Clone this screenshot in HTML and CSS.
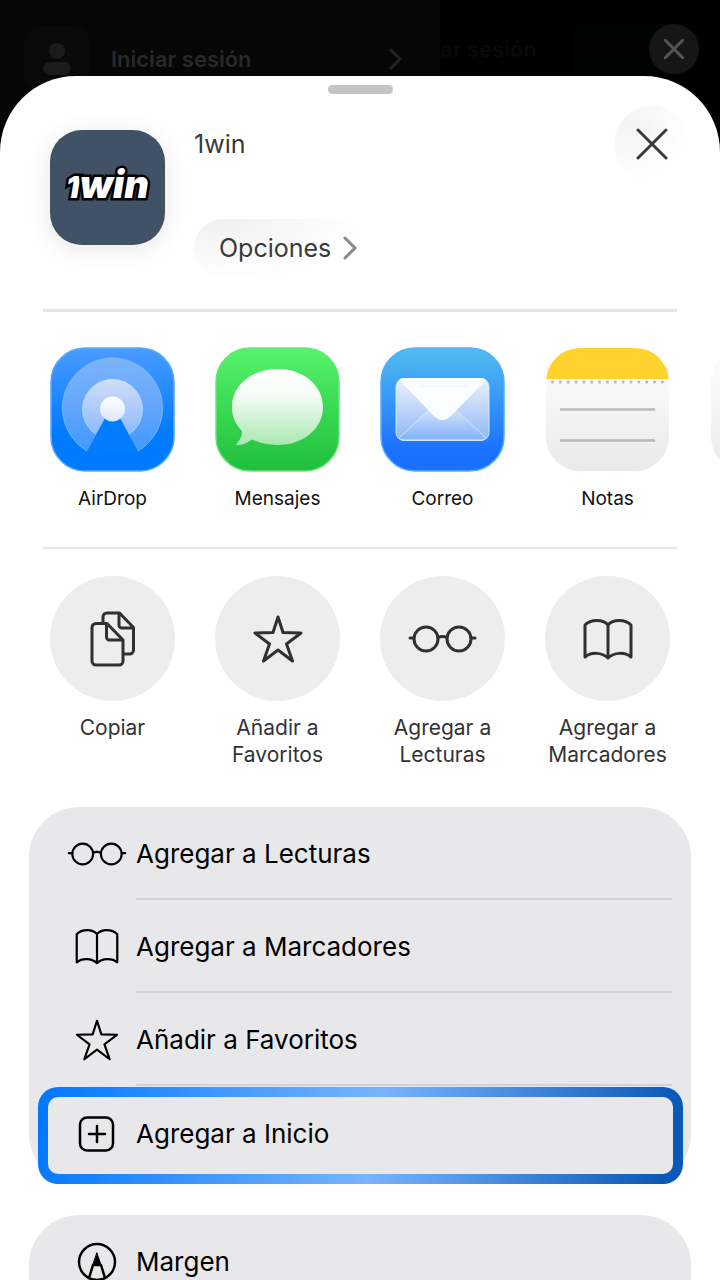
FILE: index.html
```html
<!DOCTYPE html>
<html lang="es">
<head>
<meta charset="utf-8">
<meta name="viewport" content="width=device-width, initial-scale=1">
<title>Compartir 1win</title>
<link rel="stylesheet" href="styles.css">
</head>
<body>

<!-- icons used more than once -->
<svg class="sprite" aria-hidden="true">
	<symbol id="glasses" viewBox="0 0 69 30">
		<circle cx="18" cy="15" r="12"/>
		<circle cx="51" cy="15" r="12"/>
		<path d="M30 13.500q4.500-2 9 0M2 14H6M63 14h4"/>
	</symbol>
	<symbol id="book" viewBox="0 0 50 42">
		<path d="M25 7C20 1 8 1 2 7V39C8 34 19 34 25 40C31 34 42 34 48 39V7C42 1 30 1 25 7V40"/>
	</symbol>
	<symbol id="star" viewBox="0 0 50 48">
		<path d="M25 2L30 17.500L48 18L33.500 29L39.500 46L25 35L10.500 46L16.500 29L2 18L20 17.500Z"/>
	</symbol>
</svg>

<div class="screen">
	<header class="backdrop">
		<div class="menu">
			<span class="avatar">
				<svg width="30" height="34" viewBox="0 0 30 34"><circle cx="15" cy="9" r="8"/><rect x="1" y="20" width="28" height="13" rx="7"/></svg>
			</span>
			<span class="login">Iniciar sesión</span>
			<svg class="menu-arrow" width="14" height="24" viewBox="0 0 14 24"><path d="M2 2l10 10L2 22"/></svg>
		</div>
		<div class="page-bar">
			<span class="page-login">ar sesión</span>
			<span class="page-register"></span>
			<button class="menu-close" aria-label="Cerrar menú">
				<svg width="20" height="20" viewBox="0 0 20 20"><path d="M1 1l18 18M19 1L1 19"/></svg>
			</button>
		</div>
	</header>

	<main class="sheet">
		<div class="grabber"></div>

		<section class="app">
			<div class="app-icon"><span><small>1</small>win</span></div>
			<div class="app-info">
				<h1>1win</h1>
				<button class="options">Opciones
					<svg width="16" height="26" viewBox="0 0 16 26"><path d="M3 3l10 10L3 23"/></svg>
				</button>
			</div>
			<button class="close" aria-label="Cerrar">
				<svg width="32" height="32" viewBox="0 0 32 32"><path d="M2 2l28 28M30 2L2 30"/></svg>
			</button>
		</section>

		<nav class="row apps">
			<a href="#" class="item">
				<svg width="125" height="125" viewBox="0 0 125 125">
					<defs>
						<linearGradient id="air" x2="0" y2="1"><stop offset="0" stop-color="#4a9bff"/><stop offset=".7" stop-color="#007aff"/></linearGradient>
						<linearGradient id="airOuter" x2="0" y2="1"><stop offset="0" stop-color="#7db4fa"/><stop offset=".5" stop-color="#65a6fb"/><stop offset="1" stop-color="#3f99ff"/></linearGradient>
						<linearGradient id="airInner" x2="0" y2="1"><stop offset="0" stop-color="#d0def8"/><stop offset="1" stop-color="#8fb9fc"/></linearGradient>
						<linearGradient id="pearl" x2="0" y2="1"><stop offset="0" stop-color="#fff"/><stop offset="1" stop-color="#dce7fa"/></linearGradient>
					</defs>
					<rect x="1" y="1" width="123" height="123" rx="34" fill="url(#air)" stroke="#58aaff" stroke-width="1.500"/>
					<path d="M37 104A50 50 0 1 1 88 104L62.500 58Z" fill="url(#airOuter)" stroke="#7fbcff" stroke-width=".8"/>
					<path d="M47 88A30 30 0 1 1 78 88L62.500 60Z" fill="url(#airInner)" stroke="#bdddff" stroke-width=".8"/>
					<path d="M36.500 105L55 71H70L88.500 105Z" fill="#047cff"/>
					<circle cx="62.500" cy="62" r="12.500" fill="url(#pearl)"/>
				</svg>
				<span>AirDrop</span>
			</a>
			<a href="#" class="item">
				<svg width="125" height="125" viewBox="0 0 125 125">
					<defs>
						<linearGradient id="sms" x2="0" y2="1"><stop offset="0" stop-color="#56f36c"/><stop offset="1" stop-color="#1fbf3b"/></linearGradient>
						<linearGradient id="bubble" x2="0" y2="1"><stop offset="0" stop-color="#fff"/><stop offset=".35" stop-color="#f4fcf5"/><stop offset="1" stop-color="#a9e8b1"/></linearGradient>
					</defs>
					<rect x="1" y="1" width="123" height="123" rx="34" fill="url(#sms)" stroke="#66e67a" stroke-width="1.500"/>
					<path d="M62.500 22C88 22 108 38 108 60S88 98 62.500 98C53 98 45 96 37 92.500C32 96 28 98 22 98C21 98 21 97 22 96C26 92 27 88 27 84C20 77 17 69 17 60C17 38 37 22 62.500 22Z" fill="url(#bubble)"/>
				</svg>
				<span>Mensajes</span>
			</a>
			<a href="#" class="item">
				<svg width="125" height="125" viewBox="0 0 125 125">
					<defs>
						<linearGradient id="mail" x2="0" y2="1"><stop offset="0" stop-color="#52bdef"/><stop offset=".85" stop-color="#1a70ff"/></linearGradient>
						<linearGradient id="paper" x2="0" y2="1"><stop offset="0" stop-color="#ecf2fd"/><stop offset="1" stop-color="#8db7f4"/></linearGradient>
						<linearGradient id="fold" x2="0" y2="1"><stop offset="0" stop-color="#e2eafa"/><stop offset="1" stop-color="#7fb2fb"/></linearGradient>
					</defs>
					<rect x="1" y="1" width="123" height="123" rx="34" fill="url(#mail)" stroke="#5aaef8" stroke-width="1.500"/>
					<rect x="16" y="31.500" width="93" height="62" rx="8" fill="url(#paper)" stroke="#d0e8ff"/>
					<path d="M19 91L54 58H71L106 91Q104 93 101 93H24Q21 93 19 91Z" fill="url(#fold)" stroke="#cdeaff"/>
					<path d="M19 33Q21 31 24 31H101Q104 31 106 33L72 68Q62.500 78 53 68Z" fill="#fcfdff"/>
					<path d="M40 39h48" stroke="#ecf1fa" fill="none"/>
				</svg>
				<span>Correo</span>
			</a>
			<a href="#" class="item">
				<svg width="125" height="125" viewBox="0 0 125 125">
					<defs>
						<linearGradient id="note" x2="0" y2="1"><stop offset=".25" stop-color="#fafafa"/><stop offset="1" stop-color="#e9e9e9"/></linearGradient>
						<clipPath id="noteClip"><rect x="1" y="1" width="123" height="123" rx="34"/></clipPath>
					</defs>
					<g clip-path="url(#noteClip)">
						<path d="M0 0h125v125H0z" fill="url(#note)"/>
						<path d="M0 0h125v32H0z" fill="#ffd22e"/>
					</g>
					<path d="M7.500 35H118" fill="none" stroke="#b8b5ad" stroke-width="3" stroke-linecap="round" stroke-dasharray="0 7.850"/>
					<path d="M16 62.500h93M16 93.500h93" stroke="#b9b9b9" stroke-width="2.500" stroke-linecap="round"/>
				</svg>
				<span>Notas</span>
			</a>
			<a href="#" class="item" aria-label="Más">
				<svg width="125" height="125" viewBox="0 0 125 125"><rect x="1" y="1" width="123" height="123" rx="34" fill="url(#note)"/></svg>
			</a>
		</nav>

		<div class="row actions">
			<button class="item">
				<span class="circle"><svg width="46" height="56" viewBox="0 0 46 56">
					<path d="M6 12.500H17L33 29V50a4 4 0 0 1-4 4H6a4 4 0 0 1-4-4V16.500a4 4 0 0 1 4-4zM16.500 13V26a3 3 0 0 0 3 3H33"/>
					<path d="M13 12V6a4 4 0 0 1 4-4H29.500L43.500 16.500V39a4 4 0 0 1-4 4H33.500M29 2.500V14a3 3 0 0 0 3 3H43"/>
				</svg></span>
				<span>Copiar</span>
			</button>
			<button class="item">
				<span class="circle"><svg width="50" height="48"><use href="#star"/></svg></span>
				<span>Añadir a<br>Favoritos</span>
			</button>
			<button class="item">
				<span class="circle"><svg width="69" height="30"><use href="#glasses"/></svg></span>
				<span>Agregar a<br>Lecturas</span>
			</button>
			<button class="item">
				<span class="circle"><svg width="50" height="42"><use href="#book"/></svg></span>
				<span>Agregar a<br>Marcadores</span>
			</button>
		</div>

		<div class="card">
			<button class="line">
				<svg width="60" height="26"><use href="#glasses"/></svg>
				<span>Agregar a Lecturas</span>
			</button>
			<button class="line">
				<svg width="60" height="37"><use href="#book"/></svg>
				<span>Agregar a Marcadores</span>
			</button>
			<button class="line">
				<svg width="60" height="42"><use href="#star"/></svg>
				<span>Añadir a Favoritos</span>
			</button>
			<button class="line highlight">
				<svg width="60" height="36" viewBox="0 0 60 36"><rect x="13" y="1.500" width="33" height="33" rx="7"/><path d="M30 10v16M22 18h16"/></svg>
				<span>Agregar a Inicio</span>
			</button>
		</div>

		<div class="card">
			<button class="line">
				<svg width="60" height="40" viewBox="0 0 60 40"><circle cx="30" cy="20" r="18"/><path d="M22 36l4-13h8l4 13"/><path class="solid" d="M30 11l4 12h-8z"/></svg>
				<span>Margen</span>
			</button>
		</div>
	</main>
</div>

</body>
</html>
```
FILE: styles.css
```css
* {
	box-sizing: border-box;
}

body {
	margin: 0;
	background: #000;
	font-family: Inter, "Liberation Sans", sans-serif;
}

button {
	padding: 0;
	border: 0;
	background: none;
	font: inherit;
	color: inherit;
}

svg {
	display: block;
	flex: none;
}

.sprite {
	position: absolute;
	width: 0;
	height: 0;
}

.screen {
	display: flex;
	flex-direction: column;
	height: 100vh;
	overflow: hidden;
}

/* dimmed page behind the sheet */
.backdrop {
	display: flex;
	height: 76px;
	flex: none;
}

.menu {
	display: flex;
	align-items: center;
	flex: 0 0 440px;
	height: 118px;
	padding: 0 38px 0 24px;
	background: #060606;
}

.avatar {
	display: flex;
	align-items: center;
	justify-content: center;
	width: 66px;
	height: 66px;
	border-radius: 18px;
	background: #090909;
	fill: #1b1b1b;
}

.login {
	flex: 1;
	margin-left: 21px;
	font-size: 22px;
	font-weight: 600;
	color: #292929;
}

.menu-arrow {
	fill: none;
	stroke: #222;
	stroke-width: 3;
}

.page-bar {
	display: flex;
	align-items: center;
	flex: 1;
	height: 98px;
	padding-right: 21px;
}

.page-login {
	font-size: 22px;
	font-weight: 600;
	color: #090909;
}

.page-register {
	flex: 1;
	height: 50px;
	margin: 0 -50px 0 35px;
	border-radius: 12px;
	background: #000401;
}

.menu-close {
	display: flex;
	align-items: center;
	justify-content: center;
	width: 50px;
	height: 50px;
	border-radius: 50%;
	background: #141715;
	stroke: #555;
	stroke-width: 3;
	stroke-linecap: round;
}

.sheet {
	position: relative;
	flex: 1 0 auto;
	padding-top: 9px;
	border-radius: 76px 76px 0 0;
	background: #fff;
}

.grabber {
	width: 65px;
	height: 9px;
	margin: 0 auto;
	border-radius: 5px;
	background: #c4c4c4;
}

.app {
	display: flex;
	margin: 0 43px;
	padding: 12px 0 32px 7px;
	border-bottom: 3px solid #e6e6e6;
}

.app-icon {
	display: flex;
	align-items: center;
	justify-content: center;
	width: 115px;
	height: 115px;
	margin-top: 24px;
	padding-bottom: 8px;
	border-radius: 32px;
	background: #415267;
	box-shadow: 0 4px 24px rgba(0,0,0,0.1);
	font-size: 38px;
	font-style: italic;
	font-weight: 900;
	color: #fff;
	-webkit-text-stroke: 5px #000;
	paint-order: stroke fill;
	text-shadow: 2px 2px 0 #000;
}

.app-icon small {
	font-size: 30px;
}

.app-info {
	flex: 1;
	margin: 22px 0 0 29px;
}

.app-info h1 {
	margin: 0;
	font-size: 25px;
	font-weight: 400;
	line-height: 32px;
	color: #3a3a3a;
}

.options {
	display: flex;
	align-items: center;
	gap: 11px;
	height: 58px;
	margin-top: 59px;
	padding: 0 4px 0 25px;
	border-radius: 29px;
	background: radial-gradient(ellipse at 15% 0%, #f0f0f0, #fff 75%);
	font-size: 25px;
	color: #3a3a3a;
}

.options svg {
	fill: none;
	stroke: #8a8a8a;
	stroke-width: 3;
	stroke-linecap: round;
}

.close {
	display: flex;
	align-items: center;
	justify-content: center;
	width: 76px;
	height: 76px;
	margin-right: -13px;
	border-radius: 50%;
	background: radial-gradient(circle at 25% 25%, #f3f3f3, #fff 70%);
	stroke: #3a3a3a;
	stroke-width: 3;
	stroke-linecap: round;
}

.row {
	display: flex;
	gap: 40px;
	padding-left: 50px;
	overflow: hidden;
}

.item {
	display: flex;
	flex-direction: column;
	align-items: center;
	flex: 0 0 125px;
	text-align: center;
	text-decoration: none;
	white-space: nowrap;
}

.apps {
	padding-top: 35px;
	padding-bottom: 35px;
}

.apps .item {
	gap: 14px;
	font-size: 19px;
	line-height: 26px;
	color: #111;
}

.actions {
	margin: 0 43px;
	padding: 27px 0 0 7px;
	border-top: 2px solid #e8e8e8;
}

.actions .item {
	gap: 13px;
	font-size: 21px;
	line-height: 27px;
	color: #333;
}

.circle {
	display: flex;
	align-items: center;
	justify-content: center;
	width: 125px;
	height: 125px;
	border-radius: 50%;
	background: #ededed;
	fill: none;
	stroke: #303030;
	stroke-width: 3;
	stroke-linecap: round;
	stroke-linejoin: round;
}

.card {
	margin: 39px 29px 0;
	border-radius: 50px;
	background: #e8e8ea;
}

.card + .card {
	margin-top: 35px;
	border-radius: 50px 50px 0 0;
}

.line {
	display: flex;
	align-items: center;
	gap: 9px;
	position: relative;
	width: 100%;
	height: 93px;
	padding-left: 38px;
	font-size: 26px;
	color: #000;
	fill: none;
	stroke-linecap: round;
	stroke-linejoin: round;
}

.line svg {
	stroke: #000;
	stroke-width: 2.500;
}

.line .solid {
	fill: #000;
	stroke-width: 1;
}

/* separator starts where the text starts */
.line:not(:last-child)::after {
	content: "";
	position: absolute;
	left: 107px;
	right: 19px;
	bottom: 0;
	height: 2px;
	background: #d2d2d4;
}

.card .highlight {
	width: auto;
	min-width: calc(100% - 17px);
	height: 97px;
	margin: 1px 8px -4px 9px;
	padding-bottom: 4px;
	padding-left: 19px;
	border: 10px solid transparent;
	border-radius: 20px;
	background: linear-gradient(#e8e8ea, #e8e8ea) padding-box,
		linear-gradient(100deg, #0077ff, #78b4ff 52%, #0a58b8 97%) border-box;
}
```
